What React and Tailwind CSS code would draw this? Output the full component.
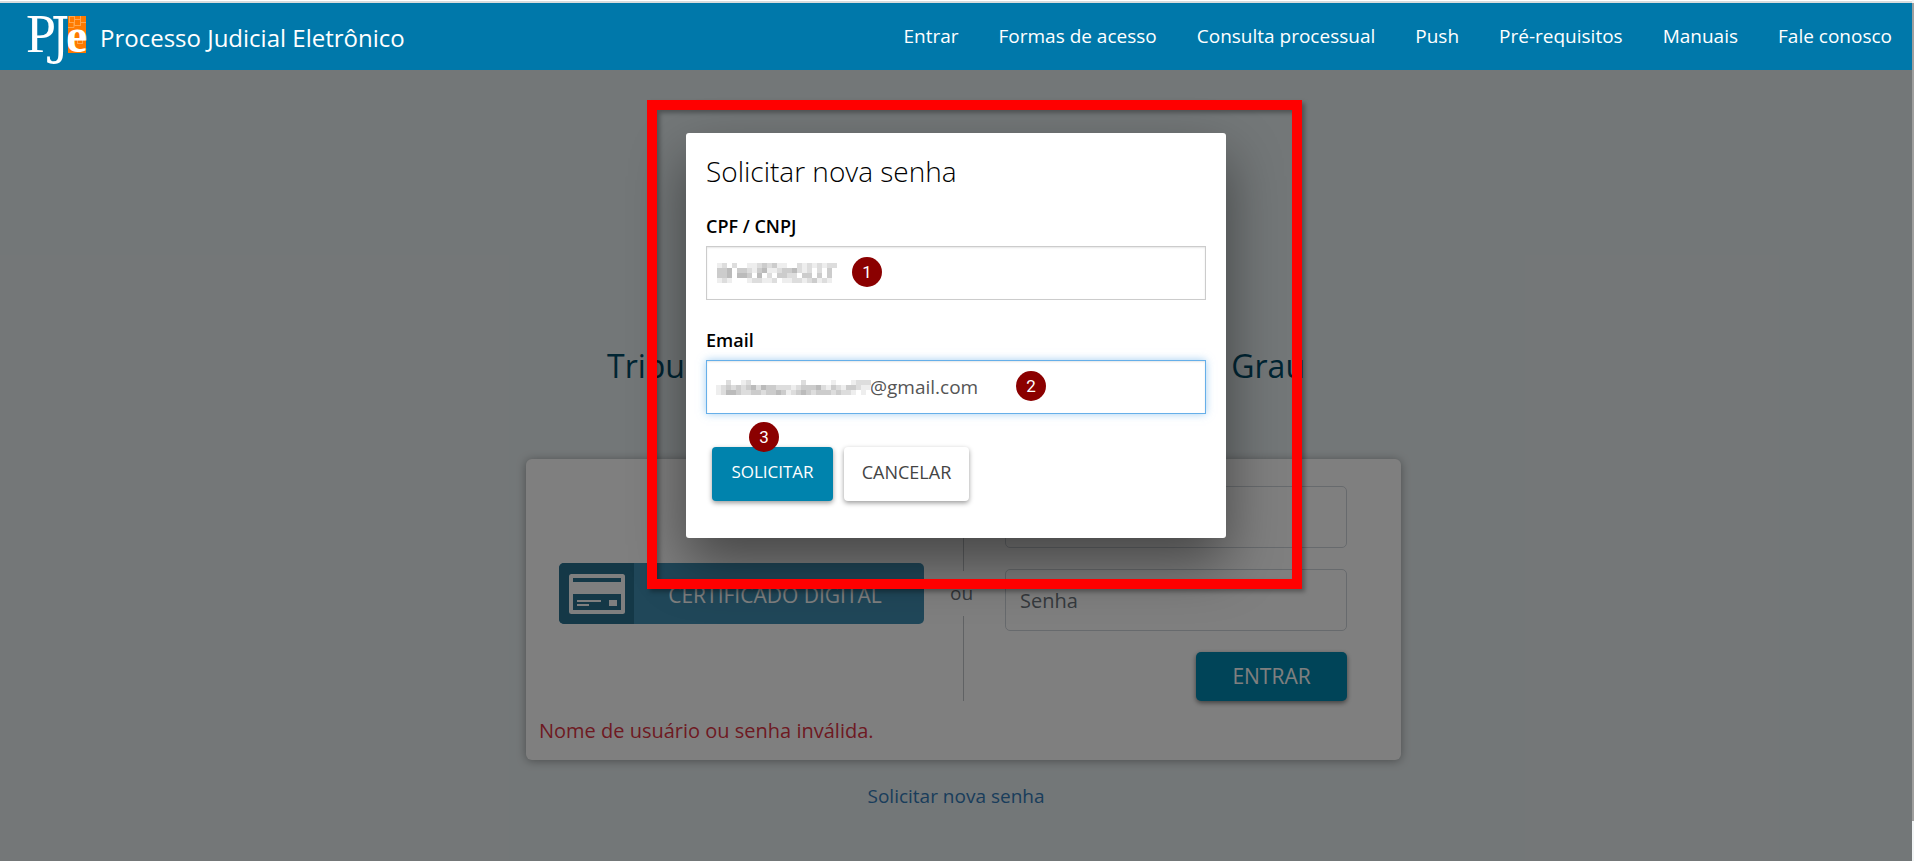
const navItems = [
  'Entrar',
  'Formas de acesso',
  'Consulta processual',
  'Push',
  'Pré-requisitos',
  'Manuais',
  'Fale conosco',
];

// One hex digit per 5px cell: the grey level of the redaction mosaic.
const cpfMosaic = [
  'edfdffeedcdceeffdedededd',
  'ccbfccdecbeedccbdedfdfcf',
  'ccbfbbcfbfdfccddfccfcfcf',
  'edefffeddeedfeeddedcede',
];
const emailMosaic = [
  'ffdffedffffffffffdfffffefffeddd',
  'edcdcdcbdbccdddedcccbdecdeccdee',
  'edbbcddccdccbcedcbcdcccdcddefef',
];

function Mosaic({ rows, className }) {
  const width = Math.max(...rows.map((r) => r.length)) * 5;
  return (
    <svg
      aria-hidden="true"
      className={className}
      width={width}
      height={rows.length * 5}
      shapeRendering="crispEdges"
    >
      {rows.map((row, y) =>
        [...row].map((c, x) => (
          <rect key={`${x}-${y}`} x={x * 5} y={y * 5} width="5" height="5" fill={`#${c}${c}${c}`} />
        )),
      )}
    </svg>
  );
}

function Marker({ children, className }) {
  return (
    <span
      className={`absolute flex size-[30px] items-center justify-center rounded-full bg-[#8b0000] font-[Roboto,sans-serif] text-[17px] leading-none text-white ${className}`}
    >
      {children}
    </span>
  );
}

function Logo() {
  return (
    <svg width="64" height="66" viewBox="0 0 64 66" role="img" aria-label="PJe" className="overflow-visible">
      <rect x="42" y="12" width="18" height="37" fill="#ff7a00" />
      <g fill="none" stroke="#ffa64d" strokeWidth="1">
        <rect x="43.5" y="12.5" width="5" height="6" />
        <rect x="48.5" y="15.5" width="6" height="6" />
        <path d="M42 23.500h6v-5M55 18.500h5M54.500 12v3" />
        <rect x="51.500" y="34.500" width="5" height="5" />
      </g>
      <text fill="#fff" y="48">
        <tspan x="0" fontFamily="Liberation Serif, serif" fontSize="54">
          P
        </tspan>
        <tspan x="25" y="49" fontFamily="DejaVu Serif Condensed, DejaVu Serif, serif" fontSize="51">
          J
        </tspan>
        <tspan x="40" y="48" fontFamily="Liberation Serif, serif" fontWeight="700" fontSize="48">
          e
        </tspan>
      </text>
    </svg>
  );
}

function CardIcon() {
  return (
    <svg width="56" height="40" viewBox="0 0 56 40" aria-hidden="true">
      <rect x="0" y="0" width="56" height="40" rx="2.500" fill="#fff" />
      <rect x="4" y="4" width="48" height="4" fill="#28708f" />
      <rect x="4" y="20" width="48" height="16" fill="#28708f" />
      <rect x="8" y="26" width="24" height="2" fill="#fff" />
      <rect x="8" y="30" width="12" height="2" fill="#fff" />
      <rect x="40" y="26" width="8" height="6" fill="#fff" />
    </svg>
  );
}

function LoginPage() {
  return (
    <div className="flex flex-col items-center px-4 pt-[276px]">
      <h1 className="flex w-full max-w-[698px] justify-between text-[32px] leading-10 text-[#004a66]">
        <span>Tribunal</span>
        <span>Grau</span>
      </h1>

      <section className="mt-[73px] ml-[15px] w-full max-w-[875px] rounded-md bg-white pt-[27px] pb-[14px] shadow-[0_1px_10px_rgba(0,0,0,0.35)]">
        <div className="flex pr-[54px] pl-[33px]">
          <div className="flex flex-1 items-center">
            <button
              type="button"
              className="flex h-[61px] w-full overflow-hidden rounded-[5px] bg-[#408fb2] text-[21px] text-white"
            >
              <span className="flex h-full w-[75px] items-center justify-center bg-[#28708f]">
                <CardIcon />
              </span>
              <span className="flex h-full flex-1 items-center justify-center pt-1 pr-2">CERTIFICADO DIGITAL</span>
            </button>
          </div>
          <div className="flex w-[81px] flex-col items-center pr-[2px] text-[19px] text-[#6c757d]">
            <span className="w-px flex-1 bg-[#c0c4c8]" />
            <span className="flex h-[45px] items-center pr-1">ou</span>
            <span className="w-px flex-1 bg-[#c0c4c8]" />
          </div>
          <form className="flex w-[342px] flex-col gap-[21px]">
            <input
              type="text"
              aria-label="CPF/CNPJ"
              placeholder="CPF/CNPJ"
              className="h-[62px] w-full rounded-[5px] border border-[#ced4da] px-[14px] text-xl placeholder:text-[#6c757d]"
            />
            <input
              type="password"
              aria-label="Senha"
              placeholder="Senha"
              className="h-[62px] w-full rounded-[5px] border border-[#ced4da] px-[14px] text-xl placeholder:text-[#6c757d]"
            />
            <button
              type="button"
              className="h-[49px] w-[151px] self-end rounded-[5px] bg-[#0088b0] text-[21px] text-white shadow-[0_2px_5px_rgba(0,0,0,0.5)]"
            >
              ENTRAR
            </button>
          </form>
        </div>
        <p className="mt-[15px] px-[13px] text-xl leading-[30px] text-[#dc3545]">
          Nome de usuário ou senha inválida.
        </p>
      </section>

      <a href="#nova-senha" className="mt-[22px] text-[19px] leading-7 text-[#337ab7]">
        Solicitar nova senha
      </a>
    </div>
  );
}

function PasswordDialog() {
  return (
    <div
      role="dialog"
      aria-labelledby="dialog-title"
      className="relative w-full max-w-[540px] rounded-[3px] bg-white px-5 pt-[18px] pb-[37px] shadow-[0_25px_55px_rgba(0,0,0,0.45)]"
    >
      <h2 id="dialog-title" className="text-[28px] leading-10 font-light text-black">
        Solicitar nova senha
      </h2>

      <label htmlFor="cpf" className="mt-[21px] block text-lg leading-7 font-semibold text-black">
        CPF / CNPJ
      </label>
      <div className="relative mt-[6px]">
        <input
          id="cpf"
          type="text"
          className="block h-[54px] w-full border border-[#ccc] bg-white px-[10px] text-[19px] text-[#555] shadow-[inset_0_1px_2px_rgba(0,0,0,0.1)]"
        />
        <Mosaic rows={cpfMosaic} className="absolute top-[17px] left-[11px]" />
        <Marker className="top-[11px] left-[146px]">1</Marker>
      </div>

      <label htmlFor="email" className="mt-[26px] block text-lg leading-7 font-semibold text-black">
        Email
      </label>
      <div className="relative mt-[6px]">
        <input
          id="email"
          type="text"
          defaultValue="@gmail.com"
          className="block h-[54px] w-full border border-[#66afe9] bg-white pr-[10px] pl-[163px] text-[19px] text-[#555] shadow-[inset_0_1px_2px_rgba(0,0,0,0.1),0_0_8px_rgba(102,175,233,0.6)] outline-none"
        />
        <Mosaic rows={emailMosaic} className="absolute top-[20px] left-[10px]" />
        <Marker className="top-[11px] left-[310px]">2</Marker>
      </div>

      <div className="mt-[33px] flex gap-[11px] pl-[6px]">
        <div className="relative">
          <button
            type="button"
            className="h-[54px] w-[121px] rounded bg-[#0083ad] pb-1 text-[17px] font-medium text-white shadow-[0_2px_5px_rgba(0,0,0,0.4)]"
          >
            SOLICITAR
          </button>
          <Marker className="-top-[25px] left-[37px]">3</Marker>
        </div>
        <button
          type="button"
          className="h-[54px] w-[125px] rounded bg-white pb-1 text-lg text-[#444] shadow-[0_2px_5px_rgba(0,0,0,0.4)]"
        >
          CANCELAR
        </button>
      </div>

      <div className="pointer-events-none absolute -top-[33px] -right-[76px] -bottom-[51px] -left-[39px] border-[10px] border-[#f00] drop-shadow-[3px_3px_2px_rgba(0,0,0,0.3)]" />
    </div>
  );
}

export default function App() {
  return (
    <div className="flex min-h-screen font-['Open_Sans',sans-serif]">
      <div className="flex flex-1 flex-col overflow-hidden">
        <div className="h-[3px] border-t border-white bg-[#d9dcdd]" />
        <header className="relative z-10 flex h-[67px] items-center justify-between bg-[#0078aa] text-white">
          <a href="#inicio" className="flex items-center pl-[26px]">
            <Logo />
            <span className="pt-[2px] pl-[10px] text-2xl">Processo Judicial Eletrônico</span>
          </a>
          <nav className="flex text-[19px]">
            {navItems.map((item) => (
              <a key={item} href="#menu" className="px-5">
                {item}
              </a>
            ))}
          </nav>
        </header>
        <main className="relative flex-1 bg-[#e7eef0]">
          <LoginPage />
          <div className="absolute inset-0 flex items-start justify-center bg-black/50 pt-[63px]">
            <PasswordDialog />
          </div>
        </main>
      </div>
      <div className="flex w-[2px] flex-col bg-[#f1f4f5] pt-[3px] pb-10">
        <span className="flex-1 bg-[#9f9f9e]" />
      </div>
    </div>
  );
}
